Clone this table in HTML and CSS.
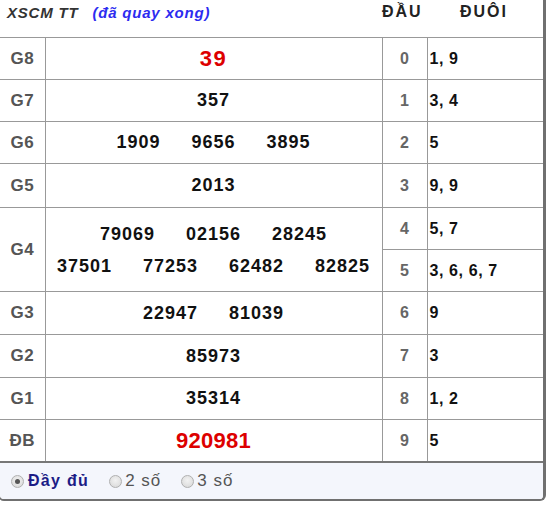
FILE: index.html
```html
<!DOCTYPE html>
<html lang="vi">
<head>
<meta charset="utf-8">
<title>XSCM TT</title>
<link rel="stylesheet" href="styles.css">
</head>
<body>
<div class="box">
  <div class="head">
    <div class="title"><span class="t1">XSCM TT</span><span class="t2">(đã quay xong)</span></div>
    <div class="hcol h-dau">ĐẦU</div>
    <div class="hcol h-duoi">ĐUÔI</div>
  </div>
  <table class="kq">
    <colgroup><col class="c-lbl"><col class="c-num"><col class="c-dau"><col class="c-duoi"></colgroup>
    <tr class="r42"><td class="lbl">G8</td><td class="num"><span class="red r39">39</span></td><td class="dau">0</td><td class="duoi">1, 9</td></tr>
    <tr class="r42"><td class="lbl">G7</td><td class="num">357</td><td class="dau">1</td><td class="duoi">3, 4</td></tr>
    <tr class="r42"><td class="lbl">G6</td><td class="num"><div class="nums"><span>1909</span><span>9656</span><span>3895</span></div></td><td class="dau">2</td><td class="duoi">5</td></tr>
    <tr class="r44"><td class="lbl">G5</td><td class="num">2013</td><td class="dau">3</td><td class="duoi">9, 9</td></tr>
    <tr class="r42"><td class="lbl" rowspan="2">G4</td><td class="num" rowspan="2"><div class="nums line"><span>79069</span><span>02156</span><span>28245</span></div><div class="nums line"><span>37501</span><span>77253</span><span>62482</span><span>82825</span></div></td><td class="dau">4</td><td class="duoi">5, 7</td></tr>
    <tr class="r42"><td class="dau">5</td><td class="duoi">3, 6, 6, 7</td></tr>
    <tr class="r43"><td class="lbl">G3</td><td class="num"><div class="nums"><span>22947</span><span>81039</span></div></td><td class="dau">6</td><td class="duoi">9</td></tr>
    <tr class="r43"><td class="lbl">G2</td><td class="num">85973</td><td class="dau">7</td><td class="duoi">3</td></tr>
    <tr class="r42"><td class="lbl">G1</td><td class="num">35314</td><td class="dau">8</td><td class="duoi">1, 2</td></tr>
    <tr class="r42"><td class="lbl">ĐB</td><td class="num"><span class="red db">920981</span></td><td class="dau">9</td><td class="duoi">5</td></tr>
  </table>
  <div class="foot">
    <label class="opt opt-on"><span class="radio checked"></span><span class="otext">Đầy đủ</span></label>
    <label class="opt"><span class="radio"></span><span class="otext">2 số</span></label>
    <label class="opt"><span class="radio"></span><span class="otext">3 số</span></label>
  </div>
</div>
</body>
</html>
```
FILE: styles.css
```css
body {
  margin: 0;
  background: #fff;
  font-family: "Liberation Sans", Arial, sans-serif;
}
.box {
  margin-left: -2px;
  width: 543px;
  border: 2px solid #707070;
  border-top: 0;
  border-right-width: 3px;
  border-radius: 0 0 6px 6px;
  overflow: hidden;
}
.head {
  display: grid;
  grid-template-columns: 382px 45px 116px;
  height: 37px;
}
.title {
  padding: 4px 0 0 7px;
  font-style: italic;
  font-weight: bold;
  font-size: 15px;
  line-height: 17px;
  letter-spacing: 0.8px;
}
.t1 { color: #333; }
.t2 { color: #2c2cf0; margin-left: 14px; }
.hcol {
  padding-top: 3px;
  font-weight: bold;
  font-size: 16px;
  line-height: 18px;
  color: #222;
  text-align: center;
  letter-spacing: 2px;
}
.h-dau { padding-right: 6px; }
.h-duoi { padding-right: 2px; }

.kq {
  width: 543px;
  border-collapse: collapse;
  table-layout: fixed;
}
.c-lbl { width: 45px; }
.c-num { width: 337px; }
.c-dau { width: 45px; }
.c-duoi { width: 116px; }
.kq td {
  border: 1px solid #999;
  padding: 0;
  font-weight: bold;
  vertical-align: middle;
}
.kq tr td:first-child.lbl { border-left: 0; }
.kq td.duoi { border-right: 0; }
.kq tr:last-child td { border-bottom: 1px solid #777; }
.r42 { height: 42px; }
.r43 { height: 43px; }
.r44 { height: 44px; }

.lbl {
  text-align: center;
  color: #555;
  font-size: 17px;
  letter-spacing: 0.5px;
}
.num {
  text-align: center;
  color: #111;
  font-size: 18px;
  letter-spacing: 1px;
}
.nums {
  display: flex;
  justify-content: center;
  gap: 31px;
}
.nums.line { line-height: 32px; }
.red { color: #d00; }
.r39 { font-size: 22px; letter-spacing: 1.5px; }
.db { font-size: 22px; letter-spacing: 0.3px; }
.dau {
  text-align: center;
  color: #666;
  font-size: 16px;
}
.duoi {
  padding-left: 2px !important;
  color: #111;
  font-size: 16px;
  letter-spacing: 0.6px;
}

.foot {
  height: 36px;
  background: #f4f6fc;
  border-top: 1px solid #777;
  display: flex;
  align-items: center;
  padding-left: 11px;
  gap: 20px;
}
.opt {
  display: flex;
  align-items: center;
  gap: 3px;
  font-size: 17px;
  color: #555;
  letter-spacing: 1px;
}
.opt-on {
  color: #1c1c86;
  font-weight: bold;
  font-size: 16px;
  letter-spacing: 1.3px;
  gap: 4px;
}
.radio {
  width: 11px;
  height: 11px;
  border: 1px solid #b0b0b0;
  border-radius: 50%;
  background: radial-gradient(circle at 50% 40%, #f2f2f2, #d6d6d6);
  position: relative;
}
.radio.checked::after {
  content: "";
  position: absolute;
  left: 3px;
  top: 3px;
  width: 5px;
  height: 5px;
  border-radius: 50%;
  background: #555;
}
```
